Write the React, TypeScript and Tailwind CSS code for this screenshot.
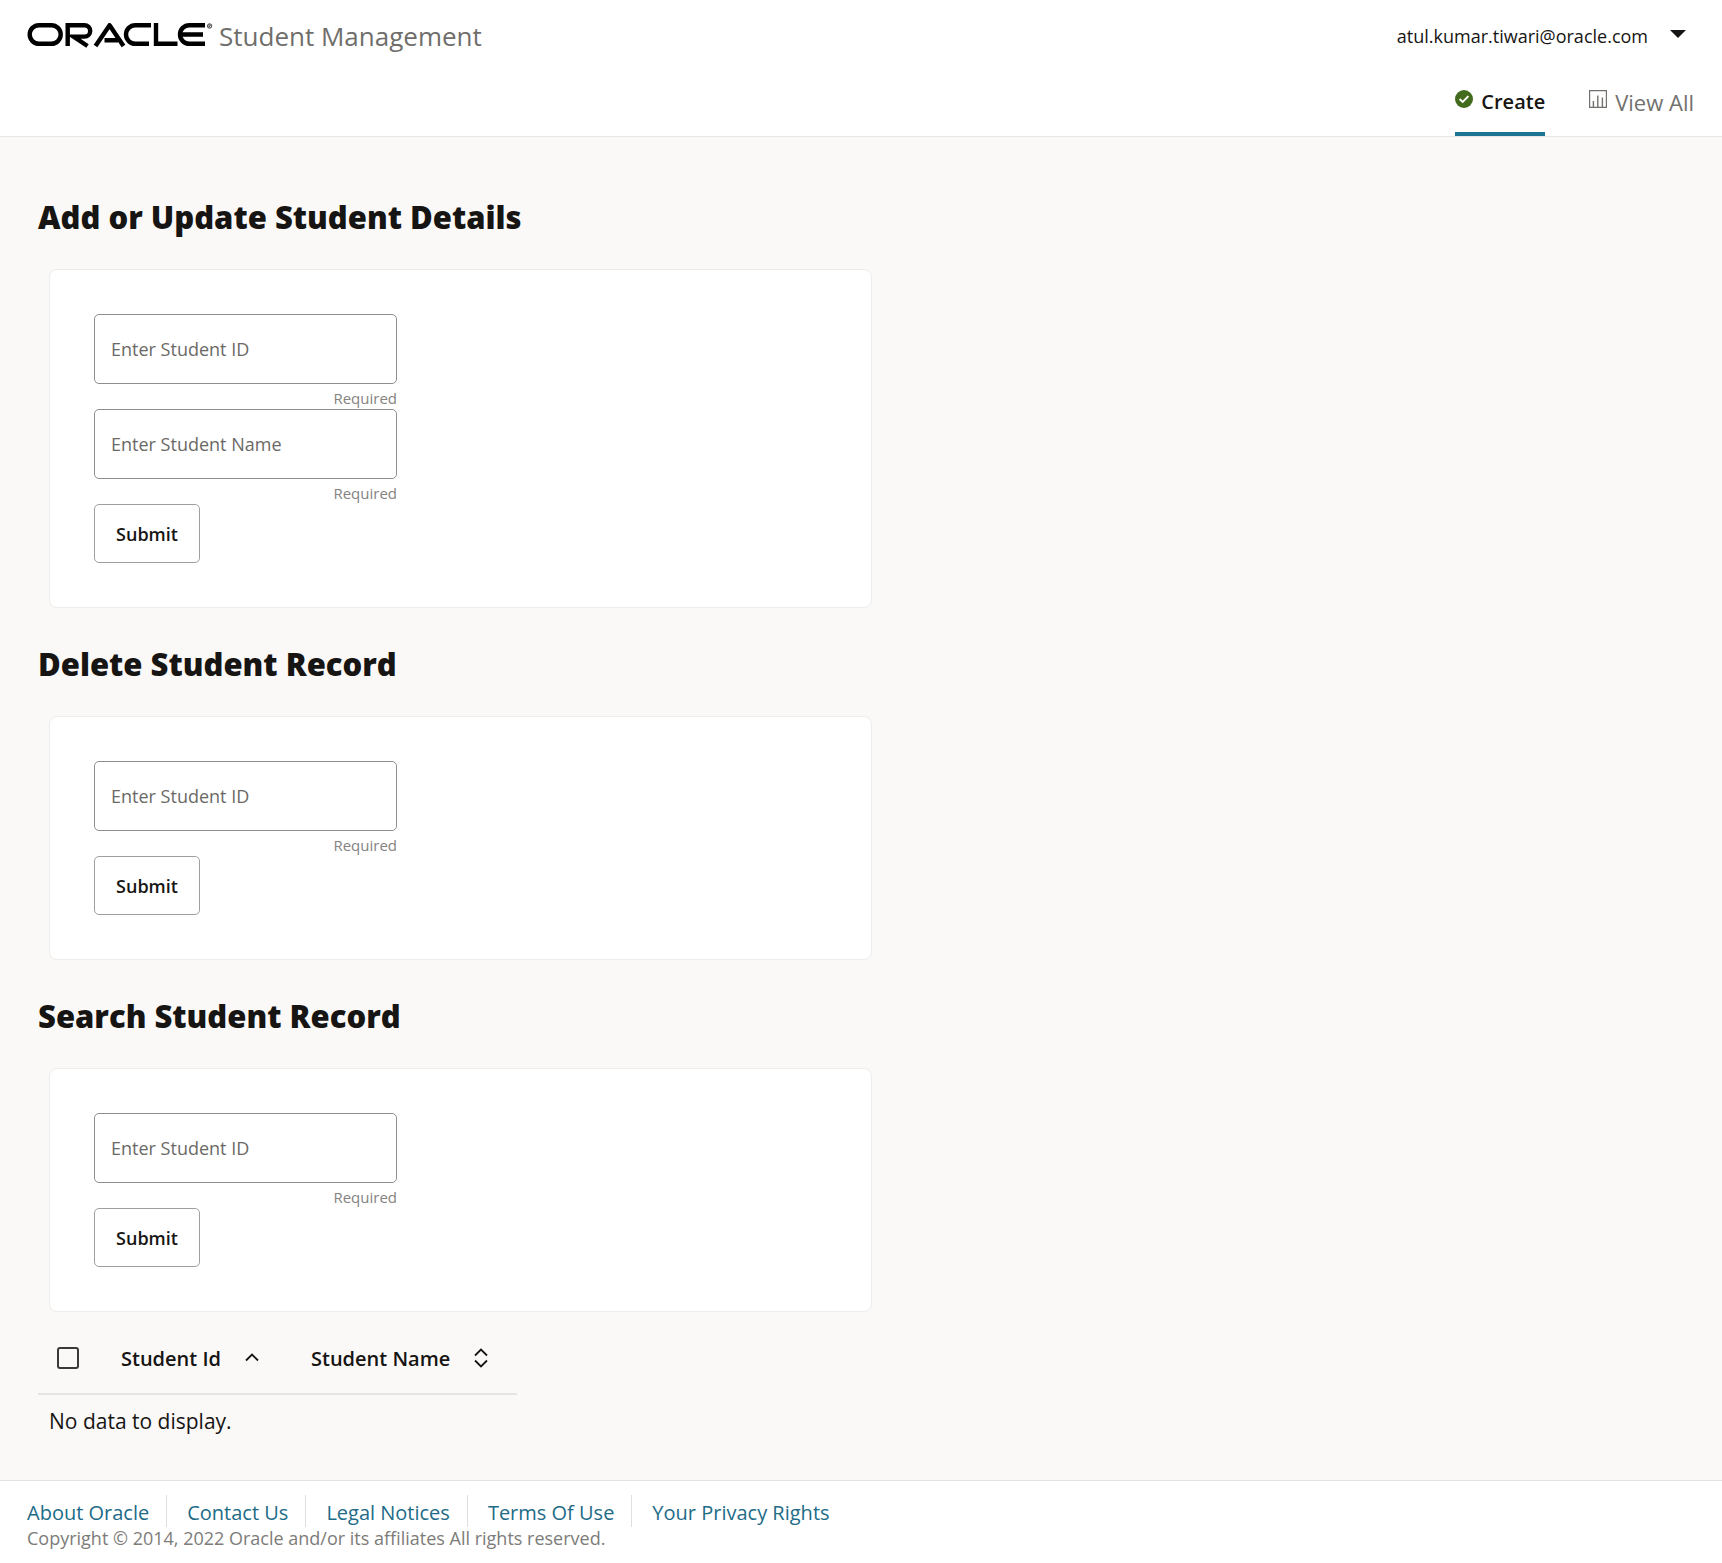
import { useId } from "react";

function OracleLogo() {
  return (
    <svg
      role="img"
      aria-label="Oracle"
      width="188"
      height="26"
      viewBox="0 1 188 26"
      fill="none"
      stroke="#000"
      strokeWidth="4.4"
      className="shrink-0"
    >
      <rect x="2.7" y="3.2" width="31" height="18.6" rx="9.3" />
      <path d="M40.7 24V3.2H57.5a5.7 5.7 0 0 1 0 11.4H46.5L60.5 24" />
      <path d="M68.5 24L82.6 3.2L96.5 24M77.5 18.2H91" strokeLinejoin="round" />
      <path d="M124 3.2H108.3a9.3 9.3 0 0 0 0 18.6H122" />
      <path d="M129 1V21.8H150.5" />
      <path d="M178 3.2H162.3a9.3 9.3 0 0 0 0 18.6H178M153.5 12.5H176" />
      <circle cx="182.6" cy="4" r="2.2" strokeWidth="0.7" />
      <path d="M181.9 5.4V2.8H182.8a.7.7 0 0 1 0 1.4H181.9L183.4 5.4" strokeWidth="0.5" />
    </svg>
  );
}

function SuccessIcon() {
  return (
    <svg aria-hidden="true" width="18" height="18" viewBox="0 0 18 18" fill="none">
      <circle cx="9" cy="9" r="9" fill="#436b1d" />
      <path d="M4.6 9L7.7 12L13.4 6.2" stroke="#fff" strokeWidth="1.9" />
    </svg>
  );
}

function ChartIcon() {
  return (
    <svg
      aria-hidden="true"
      width="18"
      height="18"
      viewBox="0 0 18 18"
      fill="none"
      stroke="currentColor"
      strokeWidth="1.2"
    >
      <path d="M.6.6H17.4V17.4H.6Z" />
      <path d="M4.4 17V11M8.8 17V5.5M13.4 17V7.5" strokeWidth="1.4" />
    </svg>
  );
}

function Field({ label }: { label: string }) {
  const id = useId();
  return (
    <div className="relative w-[303px]">
      <input
        id={id}
        type="text"
        required
        placeholder=" "
        aria-describedby={id + "-hint"}
        className="peer block h-[70px] w-full rounded-[5px] border border-[#8f8e8c] bg-white px-4 text-lg text-[#161513]"
      />
      <label
        htmlFor={id}
        className="absolute top-5 left-[17px] hidden text-lg leading-[30px] font-medium text-[#6b6966] peer-placeholder-shown:block"
      >
        {label}
      </label>
      <p id={id + "-hint"} className="h-[25px] pt-1 text-right text-[15px] leading-5 text-[#858380]">
        Required
      </p>
    </div>
  );
}

function FormSection({ title, fields }: { title: string; fields: string[] }) {
  return (
    <section className="mb-9">
      <h1 className="text-[31px] leading-10 font-extrabold">{title}</h1>
      <form
        className="mt-8 ml-[11px] w-1/2 rounded-lg border border-[#eeedeb] bg-white p-11"
        onSubmit={(e) => e.preventDefault()}
      >
        {fields.map((f) => (
          <Field key={f} label={f} />
        ))}
        <button
          type="submit"
          className="block h-[59px] w-[106px] rounded-[5px] border border-[#a09f9c] text-lg font-semibold"
        >
          Submit
        </button>
      </form>
    </section>
  );
}

const links = ["About Oracle", "Contact Us", "Legal Notices", "Terms Of Use", "Your Privacy Rights"];

export default function App() {
  return (
    <div className="flex min-h-screen flex-col bg-[#fbf9f8] font-['Open_Sans',sans-serif] text-[#161513]">
      <header className="flex h-[137px] flex-col justify-between border-b border-[#e6e7e9] bg-white">
        <div className="flex items-start justify-between pt-4 pr-9 pl-[27px]">
          <div className="flex items-center">
            <OracleLogo />
            <span className="ml-1 text-[26px] leading-10 text-[#6f6e6b]">Student Management</span>
          </div>
          <button type="button" className="flex items-center gap-[22px] text-lg leading-10 font-medium">
            atul.kumar.tiwari@oracle.com
            <svg aria-hidden="true" width="16" height="8" viewBox="0 0 16 8" className="mb-1">
              <path d="M0 0H16L8 8Z" fill="#161513" />
            </svg>
          </button>
        </div>
        <nav className="flex justify-end gap-11 pr-7">
          <a
            href="#create"
            aria-current="page"
            className="flex h-[52px] items-start gap-2 border-b-4 border-[#1b7592] text-xl leading-9 font-semibold"
          >
            <span className="pt-1.5">
              <SuccessIcon />
            </span>
            Create
          </a>
          <a
            href="#view-all"
            className="flex h-[52px] items-start gap-2 text-[22px] leading-9 font-medium text-[#73716e]"
          >
            <span className="pt-1.5">
              <ChartIcon />
            </span>
            View All
          </a>
        </nav>
      </header>

      <main className="grow px-[38px] pt-[60px]">
        <FormSection title="Add or Update Student Details" fields={["Enter Student ID", "Enter Student Name"]} />
        <FormSection title="Delete Student Record" fields={["Enter Student ID"]} />
        <FormSection title="Search Student Record" fields={["Enter Student ID"]} />

        <table className="-mt-5 w-[479px] table-fixed text-left">
          <thead className="text-xl">
            <tr className="h-[66px] border-b-2 border-[#e6e4e2]">
              <th className="w-[83px] pb-1.5 pl-[19px]">
                <input
                  type="checkbox"
                  aria-label="Select all rows"
                  className="block size-[22px] appearance-none rounded-[3px] border-2 border-[#3a3937] checked:bg-[#3a3937]"
                />
              </th>
              <th className="w-[190px] pb-1 font-semibold" aria-sort="ascending">
                <button type="button" className="flex items-center gap-6">
                  Student Id
                  <svg aria-hidden="true" width="14" height="9" viewBox="0 0 14 9" fill="none" stroke="#161513" strokeWidth="1.8" className="mb-0.5">
                    <path d="M1 7.5L7 1.5L13 7.5" />
                  </svg>
                </button>
              </th>
              <th className="pb-1 font-semibold whitespace-nowrap">
                <button type="button" className="flex items-center gap-6">
                  Student Name
                  <svg aria-hidden="true" width="14" height="20" viewBox="0 0 14 20" fill="none" stroke="#161513" strokeWidth="1.8" className="mb-0.5">
                    <path d="M1 7.5L7 1.5L13 7.5M1 12.5L7 18.5L13 12.5" />
                  </svg>
                </button>
              </th>
            </tr>
          </thead>
          <tbody className="text-[21px]">
            <tr>
              <td colSpan={3} className="h-[56px] pb-0.5 pl-[11px]">
                No data to display.
              </td>
            </tr>
          </tbody>
        </table>
      </main>

      <footer className="border-t border-[#e3e2e0] bg-white pt-3.5 pb-3.5 pl-[27px]">
        <ul className="flex text-xl">
          {links.map((l) => (
            <li
              key={l}
              className="mr-5 h-8 border-r border-[#e0dfdd] pr-[17px] leading-9 last:mr-0 last:border-r-0 last:pr-0"
            >
              <a href="#footer" className="text-[#226b87]">
                {l}
              </a>
            </li>
          ))}
        </ul>
        <p className="text-lg leading-[22px] text-[#7d7c79]">
          Copyright © 2014, 2022 Oracle and/or its affiliates All rights reserved.
        </p>
      </footer>
    </div>
  );
}
